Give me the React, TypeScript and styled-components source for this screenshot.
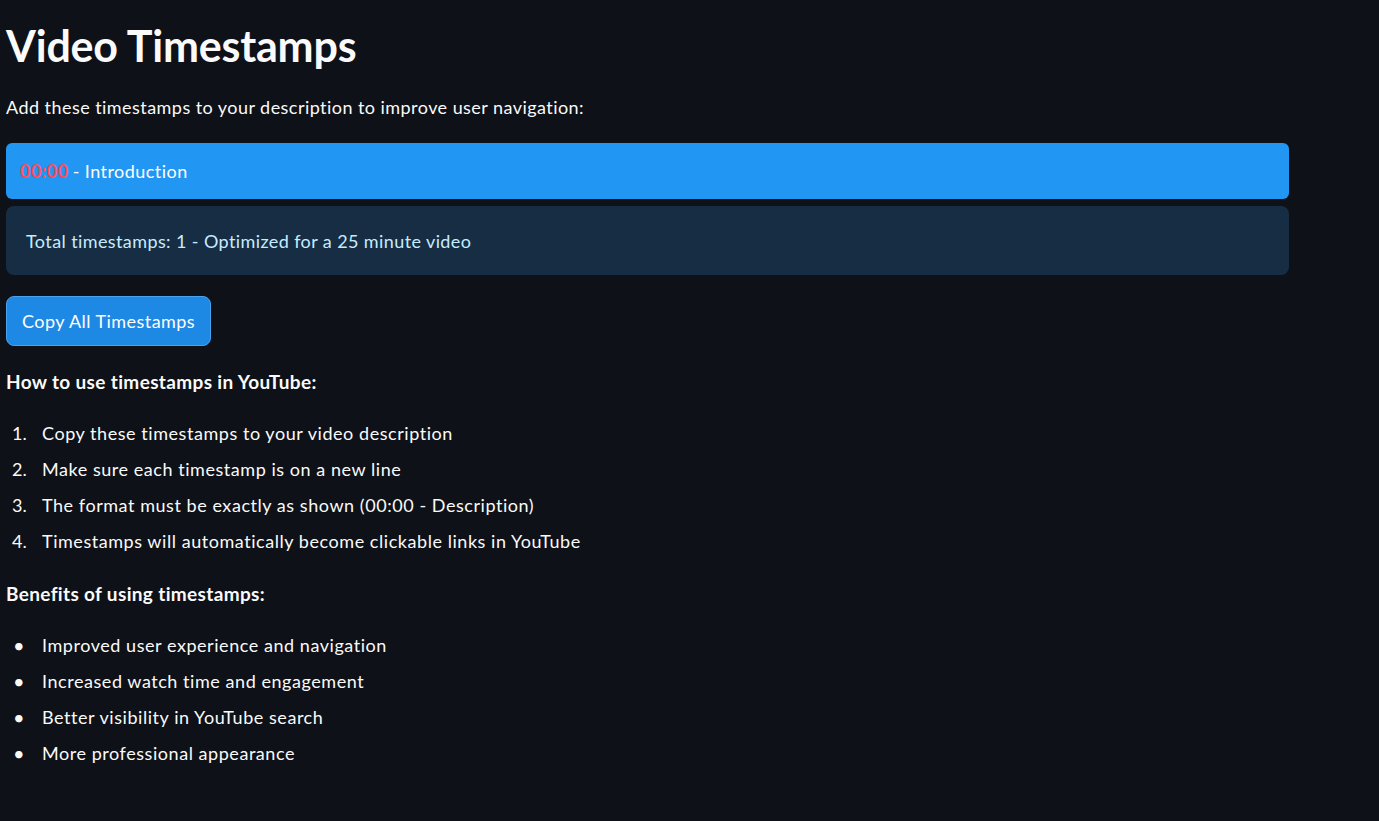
import React from "react";
import styled, { createGlobalStyle } from "styled-components";

const Global = createGlobalStyle`
  html, body { margin: 0; padding: 0; background: #0e1117; }
  body { font-family: Lato, "Noto Sans", sans-serif; color: #fafafa; }
`;

const Page = styled.main`
  min-height: 821px;
  box-sizing: border-box;
  padding: 0 90px 0 6px;
  display: flex;
  flex-direction: column;
`;

const Title = styled.h1`
  margin: 18px 0 0;
  font-size: 43px;
  font-weight: 700;
  line-height: 56px;
  letter-spacing: -0.2px;
`;

const Lead = styled.p`
  margin: 19px 0 0;
  font-size: 18px;
  letter-spacing: 0.45px;
  line-height: 28px;
`;

const StampBox = styled.div`
  margin-top: 22px;
  height: 56px;
  border-radius: 6px;
  background: #2196f3;
  display: flex;
  align-items: center;
  padding: 0 14px;
  font-size: 18px;
  letter-spacing: 0.45px;
  color: #ffffff;
  width: 1283px;
  box-sizing: border-box;
`;

const Time = styled.span`
  color: #ff4b5c;
  font-weight: 700;
  margin-right: 4px;
`;

const Info = styled.div`
  margin-top: 7px;
  height: 69px;
  width: 1283px;
  box-sizing: border-box;
  border-radius: 8px;
  background: #172d43;
  color: #c7ebff;
  display: flex;
  align-items: center;
  padding: 0 20px;
  font-size: 18px;
  letter-spacing: 0.4px;
`;

const Button = styled.button`
  margin-top: 21px;
  align-self: flex-start;
  height: 50px;
  padding: 0 15px;
  border-radius: 8px;
  background: #1e88e5;
  border: 1px solid #4aa3f0;
  color: #ffffff;
  font-family: inherit;
  font-size: 18px;
  letter-spacing: 0.45px;
  cursor: pointer;
`;

const SectionLabel = styled.p<{ $top: number }>`
  margin: ${(p) => p.$top}px 0 0;
  font-size: 19px;
  font-weight: 700;
  letter-spacing: 0.35px;
  line-height: 24px;
`;

const List = styled.ol`
  margin: 21px 0 0;
  padding: 0;
  list-style: none;
  counter-reset: item;
  font-size: 18px;
  letter-spacing: 0.55px;
`;

const Item = styled.li<{ $bullet?: boolean }>`
  display: flex;
  line-height: 36px;
  counter-increment: item;
  &::before {
    content: ${(p) => (p.$bullet ? '"•"' : 'counter(item) "."')};
    width: ${(p) => (p.$bullet ? "29px" : "30px")};
    padding-left: ${(p) => (p.$bullet ? "7px" : "6px")};
    flex: none;
    font-size: ${(p) => (p.$bullet ? "20px" : "18px")};
    letter-spacing: 0;
  }
`;

const steps = [
  "Copy these timestamps to your video description",
  "Make sure each timestamp is on a new line",
  "The format must be exactly as shown (00:00 - Description)",
  "Timestamps will automatically become clickable links in YouTube",
];

const benefits = [
  "Improved user experience and navigation",
  "Increased watch time and engagement",
  "Better visibility in YouTube search",
  "More professional appearance",
];

export default function App() {
  return (
    <>
      <Global />
      <Page>
        <Title>Video Timestamps</Title>
        <Lead>Add these timestamps to your description to improve user navigation:</Lead>
        <StampBox>
          <Time>00:00</Time>- Introduction
        </StampBox>
        <Info>Total timestamps: 1 - Optimized for a 25 minute video</Info>
        <Button>Copy All Timestamps</Button>
        <SectionLabel $top={24}>How to use timestamps in YouTube:</SectionLabel>
        <List>
          {steps.map((s) => (
            <Item key={s}>{s}</Item>
          ))}
        </List>
        <SectionLabel $top={23}>Benefits of using timestamps:</SectionLabel>
        <List as="ul">
          {benefits.map((s) => (
            <Item key={s} $bullet>
              {s}
            </Item>
          ))}
        </List>
      </Page>
    </>
  );
}
